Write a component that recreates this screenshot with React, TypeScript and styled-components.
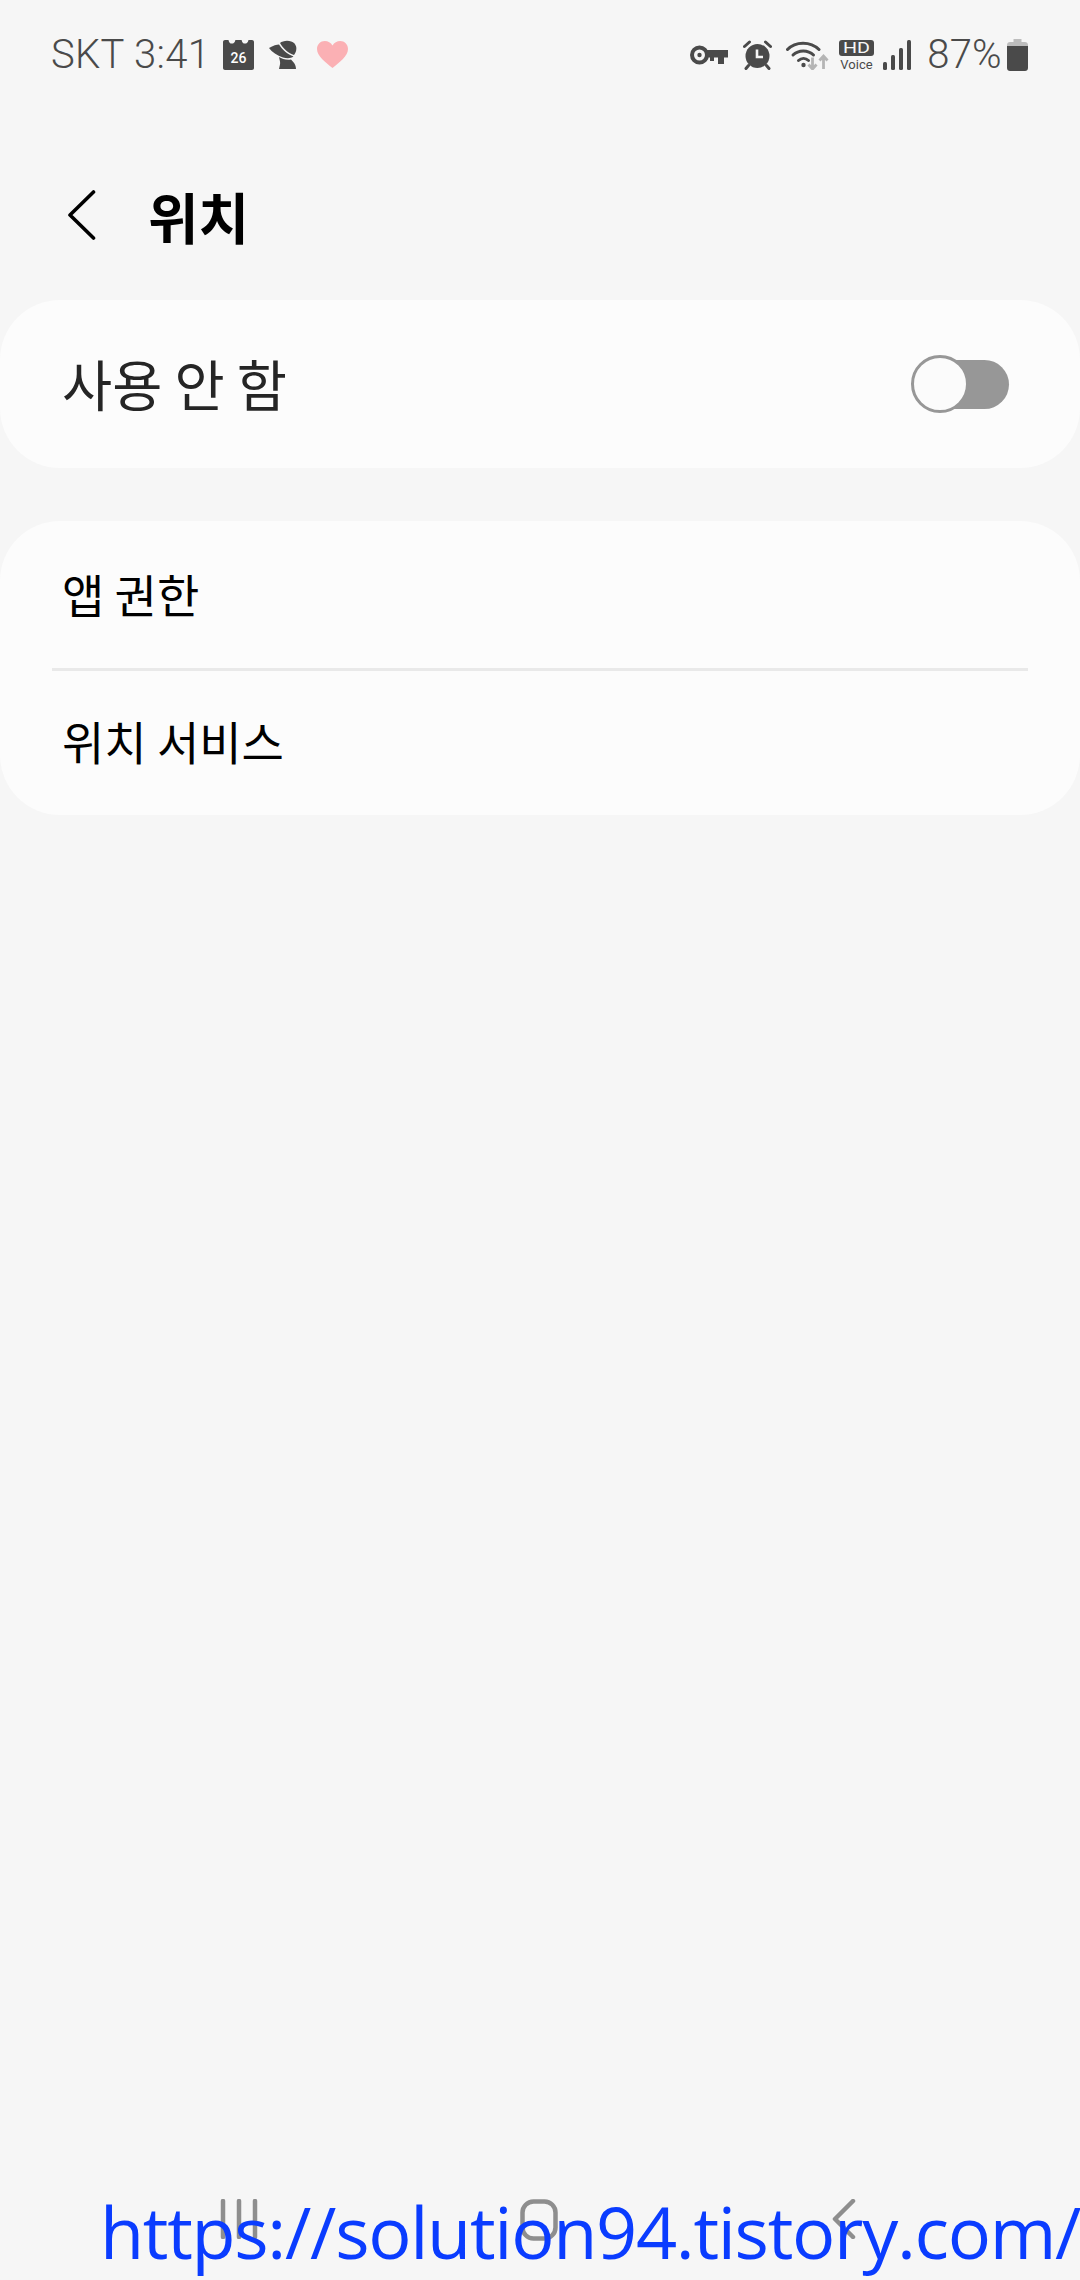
import styled, { createGlobalStyle } from "styled-components";

const GlobalStyle = createGlobalStyle`
  html, body {
    margin: 0;
    padding: 0;
    background: #f6f6f6;
  }
  * {
    box-sizing: border-box;
  }
`;

const KR = `"Noto Sans CJK KR", "Noto Sans", sans-serif`;

const Page = styled.div`
  position: relative;
  width: 1080px;
  height: 2280px;
  overflow: hidden;
  display: flex;
  flex-direction: column;
  background: #f6f6f6;
  font-family: ${KR};
`;

const StatusBar = styled.div`
  height: 106px;
  padding: 3px 52px 0 51px;
  display: flex;
  align-items: center;
  justify-content: space-between;
  color: #4a4a4a;
`;

const StatusGroup = styled.div`
  display: flex;
  align-items: center;
`;

const StatusText = styled.span<{ $right?: number }>`
  font-family: Roboto, sans-serif;
  font-size: 40px;
  font-weight: 300;
  line-height: 46px;
  letter-spacing: 0.3px;
  margin-right: ${(props) => props.$right ?? 0}px;
`;

const Icon = styled.svg<{ $right?: number }>`
  display: block;
  flex: none;
  margin-right: ${(props) => props.$right ?? 0}px;
`;

const Header = styled.header`
  height: 194px;
  padding: 24px 0 0 67px;
  display: flex;
  align-items: center;
`;

const BackBtn = styled.button`
  padding: 0;
  border: none;
  background: none;
  width: 81px;
  display: flex;
`;

const Title = styled.h1`
  margin: 0;
  font-size: 55px;
  line-height: 64px;
  font-weight: 700;
  color: #000;
`;

const Card = styled.section<{ $gap?: number }>`
  background: #fcfcfc;
  border-radius: 60px;
  margin-bottom: ${(props) => props.$gap ?? 0}px;
`;

const MasterRow = styled.div`
  height: 168px;
  padding: 0 71px 0 62px;
  display: flex;
  align-items: center;
  justify-content: space-between;
`;

const MasterLabel = styled.span`
  font-size: 54.5px;
  line-height: 64px;
  margin-top: -2px;
  color: #252525;
`;

const Switch = styled.div`
  position: relative;
  width: 92px;
  height: 49px;
  border-radius: 25px;
  background: #979797;
`;

const Thumb = styled.div`
  position: absolute;
  left: -6px;
  top: -5px;
  width: 58px;
  height: 58px;
  border-radius: 50%;
  border: 3px solid #979797;
  background: #fbfbfb;
`;

const Row = styled.div`
  height: 147px;
  padding: 0 0 4px 62px;
  display: flex;
  align-items: center;
  font-size: 46px;
  line-height: 56px;
  color: #000;
`;

const Divider = styled.div`
  height: 3px;
  margin: 0 52px -3px;
  background: #e9e9e9;
`;

const NavBar = styled.nav`
  margin-top: auto;
  height: 81px;
  padding-left: 220px;
  display: flex;
  align-items: flex-start;
`;

const Watermark = styled.div`
  position: absolute;
  left: 100px;
  top: 2185px;
  font-family: "Open Sans", sans-serif;
  font-size: 72px;
  line-height: 92px;
  letter-spacing: -1.3px;
  white-space: nowrap;
  color: #0a3cff;
`;

function CalendarIcon() {
  return (
    <Icon width="31" height="30" viewBox="0 0 31 30" $right={15}>
      <path
        d="M2 0h3.500c.6 2.600 1.500 3.600 3.300 3.600S11.800 2.600 12.400 0h6.200c.6 2.600 1.500 3.600 3.300 3.600S24.900 2.600 25.500 0H29c1.100 0 2 .9 2 2v26c0 1.100-.9 2-2 2H2c-1.100 0-2-.9-2-2V2C0 .9.900 0 2 0z"
        fill="#4a4a4a"
      />
      <text
        x="15.500"
        y="23"
        textAnchor="middle"
        fontFamily="Roboto, sans-serif"
        fontSize="14"
        fontWeight="500"
        fill="#fff"
      >
        26
      </text>
    </Icon>
  );
}

function HatIcon() {
  return (
    <Icon width="28" height="29" viewBox="0 0 28 29" $right={20}>
      <path d="M11 3C14 0 22-.5 25.500 3.500 28.500 7 27.500 12 25 15 19.500 13.500 14 8.500 11 3z" fill="#4a4a4a" />
      <path d="M0 8C4 5.500 8 4.500 10 4.500 13 9.500 19 14.500 24.500 16.500 22 18.500 18 18.500 14 17.500 8 15.500 3 12 0 8z" fill="#4a4a4a" />
      <path d="M10 17c3 2 8 3.500 12 2.500 2.500 2.500 5 5 5 9.500H10c.5-3 1.500-5 1-7.500z" fill="#4a4a4a" />
    </Icon>
  );
}

function HeartIcon() {
  return (
    <Icon width="31" height="27" viewBox="0 0 31 27">
      <path
        d="M15.500 27C9 21.500 0 15.500 0 8 0 3.400 3.500 0 7.800 0c3.200 0 6 1.700 7.700 4.500C17.200 1.700 20 0 23.200 0 27.500 0 31 3.400 31 8c0 7.500-9 13.500-15.500 19z"
        fill="#fbb0b4"
      />
    </Icon>
  );
}

function KeyIcon() {
  return (
    <Icon width="38" height="20" viewBox="0 0 38 20" $right={15}>
      <circle cx="9.500" cy="10" r="7.500" fill="none" stroke="#4a4a4a" strokeWidth="4" />
      <circle cx="9.500" cy="10" r="2.200" fill="#4a4a4a" />
      <path d="M17 5h21v7.500h-4V19h-6v-6.500h-4V16h-4v-3.500h-3z" fill="#4a4a4a" />
    </Icon>
  );
}

function AlarmIcon() {
  return (
    <Icon width="29" height="30" viewBox="0 0 29 30" $right={14}>
      <circle cx="14.500" cy="16" r="12" fill="#4a4a4a" />
      <path d="M1.500 6.500 6.500 2M27.500 6.500 22.500 2" stroke="#4a4a4a" strokeWidth="3" strokeLinecap="round" />
      <path d="M5.500 25.500 3 28.500M23.500 25.500 26 28.500" stroke="#4a4a4a" strokeWidth="3" strokeLinecap="round" />
      <path d="M14 9.500v7.500h6" fill="none" stroke="#f6f6f6" strokeWidth="2.600" />
    </Icon>
  );
}

function WifiIcon() {
  return (
    <Icon width="43" height="30" viewBox="0 0 43 30" $right={10}>
      <path d="M1.500 9.500C9.500 1 24.500 1 33 9.500" fill="none" stroke="#4a4a4a" strokeWidth="3" strokeLinecap="round" />
      <path d="M7 15c5.500-5.500 15-5.500 20.500 0" fill="none" stroke="#4a4a4a" strokeWidth="3" strokeLinecap="round" />
      <path d="M12.500 20.500c3-2.800 7-2.800 10 0" fill="none" stroke="#4a4a4a" strokeWidth="3" strokeLinecap="round" />
      <circle cx="17.500" cy="25" r="2.200" fill="#4a4a4a" />
      <path d="M26.500 17.500V29M22.500 24.500l4 4.500 4-4.500" fill="none" stroke="#b5b5b5" strokeWidth="2.800" />
      <path d="M37.500 29V16M33.500 20.500l4-4.500 4 4.500" fill="none" stroke="#b5b5b5" strokeWidth="2.800" />
    </Icon>
  );
}

function HdVoiceIcon() {
  return (
    <Icon width="35" height="36" viewBox="0 0 35 36" $right={9}>
      <rect x="0" y="3" width="35" height="16" rx="3" fill="#4a4a4a" />
      <text
        x="17.500"
        y="16"
        textAnchor="middle"
        fontFamily="Roboto, sans-serif"
        fontSize="14"
        textLength="27"
        lengthAdjust="spacingAndGlyphs"
        fill="#f6f6f6"
      >
        HD
      </text>
      <text
        x="17.500"
        y="32"
        textAnchor="middle"
        fontFamily="Roboto, sans-serif"
        fontSize="13"
        fill="#4a4a4a"
      >
        Voice
      </text>
    </Icon>
  );
}

function SignalIcon() {
  return (
    <Icon width="28" height="30" viewBox="0 0 28 30" $right={16}>
      <rect x="0" y="22" width="4" height="8" rx="1.500" fill="#4a4a4a" />
      <rect x="8" y="15" width="4" height="15" rx="1.500" fill="#4a4a4a" />
      <rect x="16" y="8" width="4" height="22" rx="1.500" fill="#4a4a4a" />
      <rect x="24" y="0" width="4" height="30" rx="1.500" fill="#4a4a4a" />
    </Icon>
  );
}

function BatteryIcon() {
  return (
    <Icon width="21" height="32" viewBox="0 0 21 32">
      <path d="M6.500 0h8v3h3.500c1.700 0 3 1.300 3 3v4H0V6c0-1.700 1.300-3 3-3h3.500z" fill="#bdbdbd" />
      <path d="M0 7h21v22c0 1.700-1.300 3-3 3H3c-1.700 0-3-1.300-3-3z" fill="#4a4a4a" />
    </Icon>
  );
}

function App() {
  return (
    <Page>
      <GlobalStyle />
      <StatusBar>
        <StatusGroup>
          <StatusText $right={13}>SKT 3:41</StatusText>
          <CalendarIcon />
          <HatIcon />
          <HeartIcon />
        </StatusGroup>
        <StatusGroup>
          <KeyIcon />
          <AlarmIcon />
          <WifiIcon />
          <HdVoiceIcon />
          <SignalIcon />
          <StatusText $right={5}>87%</StatusText>
          <BatteryIcon />
        </StatusGroup>
      </StatusBar>
      <Header>
        <BackBtn>
          <svg width="29" height="50" viewBox="0 0 29 50">
            <path
              d="M26.500 2 3 25l23.500 23"
              fill="none"
              stroke="#000"
              strokeWidth="3.600"
              strokeLinecap="round"
              strokeLinejoin="round"
            />
          </svg>
        </BackBtn>
        <Title>위치</Title>
      </Header>
      <Card $gap={53}>
        <MasterRow>
          <MasterLabel>사용 안 함</MasterLabel>
          <Switch>
            <Thumb />
          </Switch>
        </MasterRow>
      </Card>
      <Card>
        <Row>앱 권한</Row>
        <Divider />
        <Row>위치 서비스</Row>
      </Card>
      <NavBar>
        <Icon width="38" height="40" viewBox="0 0 38 40" $right={262}>
          <path d="M3 2v36M19 2v36M35 2v36" stroke="#8e8e8e" strokeWidth="4.500" strokeLinecap="round" />
        </Icon>
        <Icon width="38" height="42" viewBox="0 0 38 42" $right={274}>
          <rect x="2.500" y="2.500" width="33" height="37" rx="11" fill="none" stroke="#8e8e8e" strokeWidth="4.500" />
        </Icon>
        <Icon width="24" height="40" viewBox="0 0 24 40">
          <path d="M21 2 3 20l18 18" fill="none" stroke="#8e8e8e" strokeWidth="4.500" strokeLinecap="round" strokeLinejoin="round" />
        </Icon>
      </NavBar>
      <Watermark>https://solution94.tistory.com/</Watermark>
    </Page>
  );
}

export default App;
